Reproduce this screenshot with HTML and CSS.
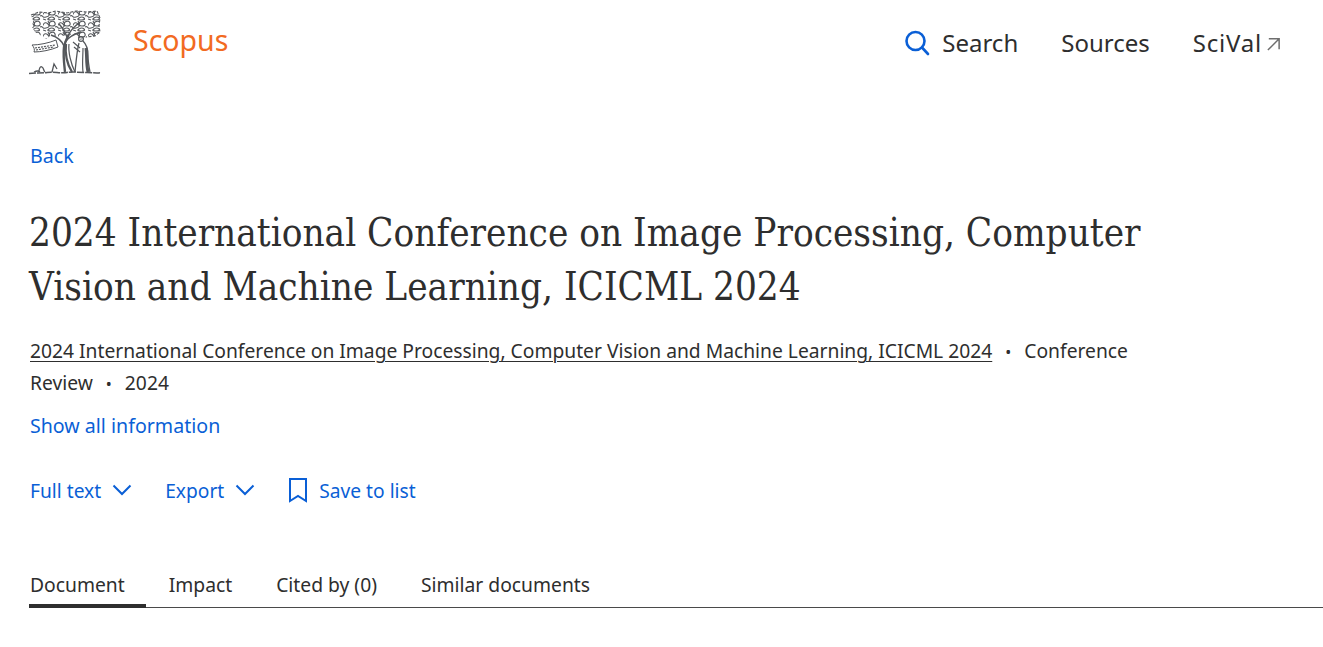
FILE: index.html
```html
<!DOCTYPE html>
<html>
<head>
  <meta charset="utf-8">
  <title>Scopus - Document details</title>
  <link rel="stylesheet" href="styles.css">
</head>

<body>
  <header class="site-header">
    <a class="brand" href="#">
      <svg class="brand-logo" width="74" height="66" viewBox="0 0 74 66" fill="none" stroke="#54575b">
        <defs>
          <pattern id="leaves" width="15" height="11" patternUnits="userSpaceOnUse">
            <path stroke-width="1.1" d="M0 4q2-4 5-1t-2 4-3-3zM7 1q4-2 5 1t-3 3-2-4zM6 8q3-2 5 0t-3 2-2-2zM12 6q2-1 3 1M0 9l3 1M5 0l1 2"/>
          </pattern>
        </defs>
        <!-- foliage -->
        <path fill="url(#leaves)" stroke="none" d="M3 5l8-3 9 1 8-2 11 2 9-2 11 1 10-1 3 7-1 8 1 6-5 4-9 1-5 3-7-5-8 0-7 2-9-1-4 3-6-4-5-3-3-5 1-6z"/>
        <path stroke-width="1.1" stroke-dasharray="3 1.5" d="M3 5l8-3 9 1 8-2 11 2 9-2 11 1 10-1 3 7-1 8 1 6-5 4-9 1"/>
        <!-- trunk and branches -->
        <path stroke-width="2.4" d="M37 62c-1-9-2-17-1-25 1-5 3-9 5-13"/>
        <path stroke-width="1.5" d="M36 36c-2-5-7-9-13-11M37 32c3-4 9-8 16-10M39 27c-2-5-4-9-8-13M41 24c2-4 6-8 10-11"/>
        <path stroke-width="2.2" d="M38 34c-1 9 1 20 6 28"/>
        <path stroke-width="1.2" d="M41 34c-1 8 2 20 6 28"/>
        <!-- banner -->
        <path stroke-width="1" d="M4 35c7 0 17-2 24-5l2 7c-7 3-17 5-24 5 1-2 0-5-2-7z"/>
        <path stroke-width="1.2" stroke-dasharray="2 1" d="M7 38l20-3M8 40l18-3"/>
        <!-- figure -->
        <circle cx="53" cy="29" r="2.4" stroke-width="1.2"/>
        <path stroke-width="1.3" d="M51 33c-2 7-3 19-4 29M55 31c3 3 5 7 5 14s1 12 2 17"/>
        <path stroke-width="3" d="M58 38c1 7 0 15 2 24"/>
        <path stroke-width="1.2" d="M55 38c0 8-1 16 0 24M52 38l-7-6M52 42l-6-5"/>
        <!-- ground -->
        <path stroke-width="1.5" stroke-dasharray="7 1" d="M1 63.5c6-1 12 0 18-1s14 1 20 0 14 0 20 0 10 1 14 0"/>
        <path stroke-width="1.3" d="M11 62c0-3 1-6 3-5s1 3 3 5M24 62l2-8 3 5M6 62q4-2 6 0"/>
      </svg>
      <span class="brand-name">Scopus</span>
    </a>
    <nav class="site-nav">
      <a class="nav-link search" href="#">
        <svg class="search-icon" width="26" height="26" viewBox="0 0 26 26" fill="none" stroke="#0a5fd6" stroke-width="2.6" stroke-linecap="round">
          <circle cx="11.5" cy="11" r="9"/>
          <path d="M18 17.5l6 6.5"/>
        </svg>
        Search
      </a>
      <a class="nav-link" href="#">Sources</a>
      <a class="nav-link scival" href="#">
        <span class="scival-text">SciVal</span>
        <svg width="15" height="15" viewBox="0 0 16 16" fill="none" stroke="#6e6e6e" stroke-width="1.6">
          <path d="M3 3h11v11M14 3L2 15"/>
        </svg>
      </a>
    </nav>
  </header>

  <main class="document">
    <a class="link back-link" href="#">Back</a>
    <h1 class="doc-title">2024 International Conference on Image Processing, Computer Vision and Machine Learning, ICICML 2024</h1>

    <p class="doc-meta">
      <a class="source-link" href="#">2024 International Conference on Image Processing, Computer Vision and Machine Learning, ICICML 2024</a>
      <span class="dot">•</span>
      <span>Conference</span>
      <span>Review</span>
      <span class="dot">•</span>
      <span>2024</span>
    </p>
    <a class="link show-all" href="#">Show all information</a>

    <div class="actions">
      <a class="link action" href="#">
        Full text
        <svg class="chevron" width="20" height="12" viewBox="0 0 20 12" fill="none" stroke="#0a5fd6" stroke-width="2"><path d="M1.5 1.5l8.5 8.5 8.5-8.5"/></svg>
      </a>
      <a class="link action" href="#">
        Export
        <svg class="chevron" width="20" height="12" viewBox="0 0 20 12" fill="none" stroke="#0a5fd6" stroke-width="2"><path d="M1.5 1.5l8.5 8.5 8.5-8.5"/></svg>
      </a>
      <a class="link action save" href="#">
        <svg width="20" height="26" viewBox="0 0 20 26" fill="none" stroke="#0a5fd6" stroke-width="2"><path d="M2 2h16v22l-8-5-8 5z"/></svg>
        Save to list
      </a>
    </div>

    <div class="tabs">
      <a class="tab active" href="#">Document</a>
      <a class="tab" href="#">Impact</a>
      <a class="tab" href="#">Cited by (0)</a>
      <a class="tab" href="#">Similar documents</a>
    </div>
  </main>
</body>
</html>
```

FILE: styles.css
```css
body {
  margin: 0;
  font-family: "Noto Sans", Arial, sans-serif;
  color: #2e2e2e;
  background-color: white;
}

a {
  text-decoration: none;
  color: inherit;
}

.site-header {
  display: flex;
  justify-content: space-between;
  align-items: flex-start;
  height: 86px;
  padding: 10px 42px 0 28px;
}

.brand {
  display: flex;
  align-items: flex-start;
  gap: 31px;
}

.brand-name {
  margin-top: 10px;
  font-size: 28.5px;
  line-height: 40px;
  color: #f26a22;
}

.site-nav {
  display: flex;
  gap: 43px;
  margin-top: 16px;
}

.nav-link {
  display: flex;
  align-items: center;
  gap: 11px;
  font-size: 24px;
  line-height: 34px;
}

.search {
  gap: 12px;
}

.scival {
  gap: 4px;
}

.scival-text {
  letter-spacing: 0.8px;
}

.document {
  padding-left: 29px;
}

.link {
  color: #0a5fd6;
  font-size: 19.6px;
}

.back-link {
  display: block;
  margin-left: 1px;
  margin-top: 46px;
  line-height: 28px;
}

.doc-title {
  max-width: 1130px;
  margin: 36px 0 0 0;
  font-family: "DejaVu Serif Condensed", "DejaVu Serif", serif;
  font-size: 38.3px;
  font-weight: normal;
  line-height: 54px;
}

.doc-meta {
  max-width: 1110px;
  margin: 21px 0 0 1px;
  font-size: 19.25px;
  line-height: 32px;
}

.source-link {
  text-decoration: underline;
  text-underline-offset: 3px;
  text-decoration-thickness: 1px;
}

.dot {
  display: inline-block;
  margin: 0 8px;
  font-size: 16px;
  line-height: 1;
}

.show-all {
  display: block;
  margin: 13px 0 0 1px;
  line-height: 28px;
}

.actions {
  display: flex;
  align-items: center;
  gap: 33px;
  margin: 36px 0 0 1px;
  height: 28px;
}

.action {
  display: flex;
  align-items: center;
  gap: 11px;
  font-size: 19.2px;
}

.tabs {
  display: flex;
  gap: 22px;
  margin-top: 67px;
  border-bottom: 1px solid #4a4a4a;
}

.tab {
  padding: 0 21px 5px 1px;
  font-size: 19.3px;
  line-height: 28px;
  border-bottom: 4px solid transparent;
  margin-bottom: -1px;
}

.tab.active {
  border-bottom-color: #2e2e2e;
}
```
